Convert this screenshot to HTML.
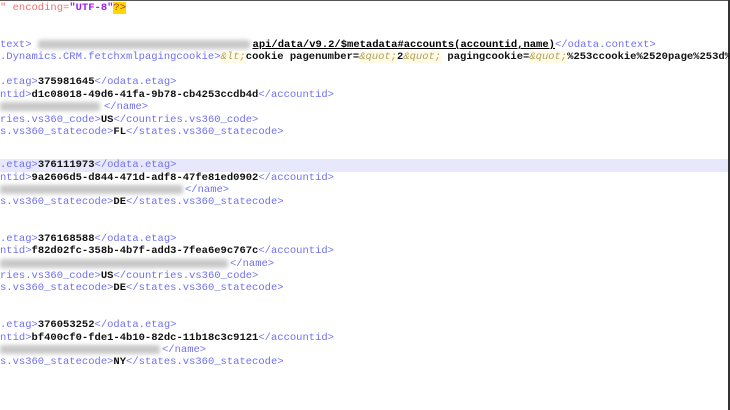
<!DOCTYPE html>
<html><head><meta charset="utf-8"><style>
body{margin:0;width:730px;height:410px;background:#fff;overflow:hidden;position:relative;font-family:"Liberation Mono","Courier New",monospace;font-size:10.5px;}
.top{position:absolute;left:0;top:0;width:730px;height:1px;background:#555}
.rb{position:absolute;right:0;top:0;width:2px;height:410px;background:#333}
.hl{position:absolute;left:0;top:159px;width:728px;height:13px;background:#e8e8fc}
.l{position:absolute;left:0;height:12px;line-height:12px;white-space:pre;color:#000}
.t{color:#6f6ff5}
b{font-weight:bold;color:#111}
.a{color:#f07070}
.v{color:#a020f0;font-weight:bold}
.q{background:#ffd800;color:#b03030}
.e{color:#b0a060;font-style:italic;background:#fffbe6}
.u{text-decoration:underline;font-weight:bold}
.bl{display:inline-block;height:9px;vertical-align:middle;background:#c8c8c8;filter:blur(2px);border-radius:2px}
</style></head><body>
<div class="top"></div><div class="rb"></div><div class="hl"></div>
<div class="l" style="top:2px"><span class="a">" encoding=</span><span class="v">"UTF-8"</span><span class="q">?&gt;</span></div>
<div class="l" style="top:39px"><span class="t">text&gt;</span><span class="bl" style="width:212px;margin:0 3px 0 6px"></span><span class="u">api/data/v9.2/$metadata#accounts(accountid,name)</span><span class="t">&lt;/odata.context&gt;</span></div>
<div class="l" style="top:51px"><span class="t">.Dynamics.CRM.fetchxmlpagingcookie&gt;</span><span class="e">&amp;lt;</span><b>cookie pagenumber=</b><span class="e">&amp;quot;</span><b>2</b><span class="e">&amp;quot;</span><b> pagingcookie=</b><span class="e">&amp;quot;</span><b>%253ccookie%2520page%253d%</b></div>
<div class="l" style="top:76px"><span class="t">.etag&gt;</span><b>375981645</b><span class="t">&lt;/odata.etag&gt;</span></div>
<div class="l" style="top:89px"><span class="t">ntid&gt;</span><b>d1c08018-49d6-41fa-9b78-cb4253ccdb4d</b><span class="t">&lt;/accountid&gt;</span></div>
<div class="l" style="top:101px"><span class="bl" style="width:100px;margin-right:4px"></span><span class="t">&lt;/name&gt;</span></div>
<div class="l" style="top:114px"><span class="t">ries.vs360_code&gt;</span><b>US</b><span class="t">&lt;/countries.vs360_code&gt;</span></div>
<div class="l" style="top:126px"><span class="t">s.vs360_statecode&gt;</span><b>FL</b><span class="t">&lt;/states.vs360_statecode&gt;</span></div>
<div class="l" style="top:159px"><span class="t">.etag&gt;</span><b>376111973</b><span class="t">&lt;/odata.etag&gt;</span></div>
<div class="l" style="top:172px"><span class="t">ntid&gt;</span><b>9a2606d5-d844-471d-adf8-47fe81ed0902</b><span class="t">&lt;/accountid&gt;</span></div>
<div class="l" style="top:184px"><span class="bl" style="width:183px;margin-right:2px"></span><span class="t">&lt;/name&gt;</span></div>
<div class="l" style="top:196px"><span class="t">s.vs360_statecode&gt;</span><b>DE</b><span class="t">&lt;/states.vs360_statecode&gt;</span></div>
<div class="l" style="top:233px"><span class="t">.etag&gt;</span><b>376168588</b><span class="t">&lt;/odata.etag&gt;</span></div>
<div class="l" style="top:245px"><span class="t">ntid&gt;</span><b>f82d02fc-358b-4b7f-add3-7fea6e9c767c</b><span class="t">&lt;/accountid&gt;</span></div>
<div class="l" style="top:258px"><span class="bl" style="width:228px;margin-right:2px"></span><span class="t">&lt;/name&gt;</span></div>
<div class="l" style="top:270px"><span class="t">ries.vs360_code&gt;</span><b>US</b><span class="t">&lt;/countries.vs360_code&gt;</span></div>
<div class="l" style="top:282px"><span class="t">s.vs360_statecode&gt;</span><b>DE</b><span class="t">&lt;/states.vs360_statecode&gt;</span></div>
<div class="l" style="top:319px"><span class="t">.etag&gt;</span><b>376053252</b><span class="t">&lt;/odata.etag&gt;</span></div>
<div class="l" style="top:332px"><span class="t">ntid&gt;</span><b>bf400cf0-fde1-4b10-82dc-11b18c3c9121</b><span class="t">&lt;/accountid&gt;</span></div>
<div class="l" style="top:344px"><span class="bl" style="width:160px;margin-right:2px"></span><span class="t">&lt;/name&gt;</span></div>
<div class="l" style="top:356px"><span class="t">s.vs360_statecode&gt;</span><b>NY</b><span class="t">&lt;/states.vs360_statecode&gt;</span></div>
</body></html>
